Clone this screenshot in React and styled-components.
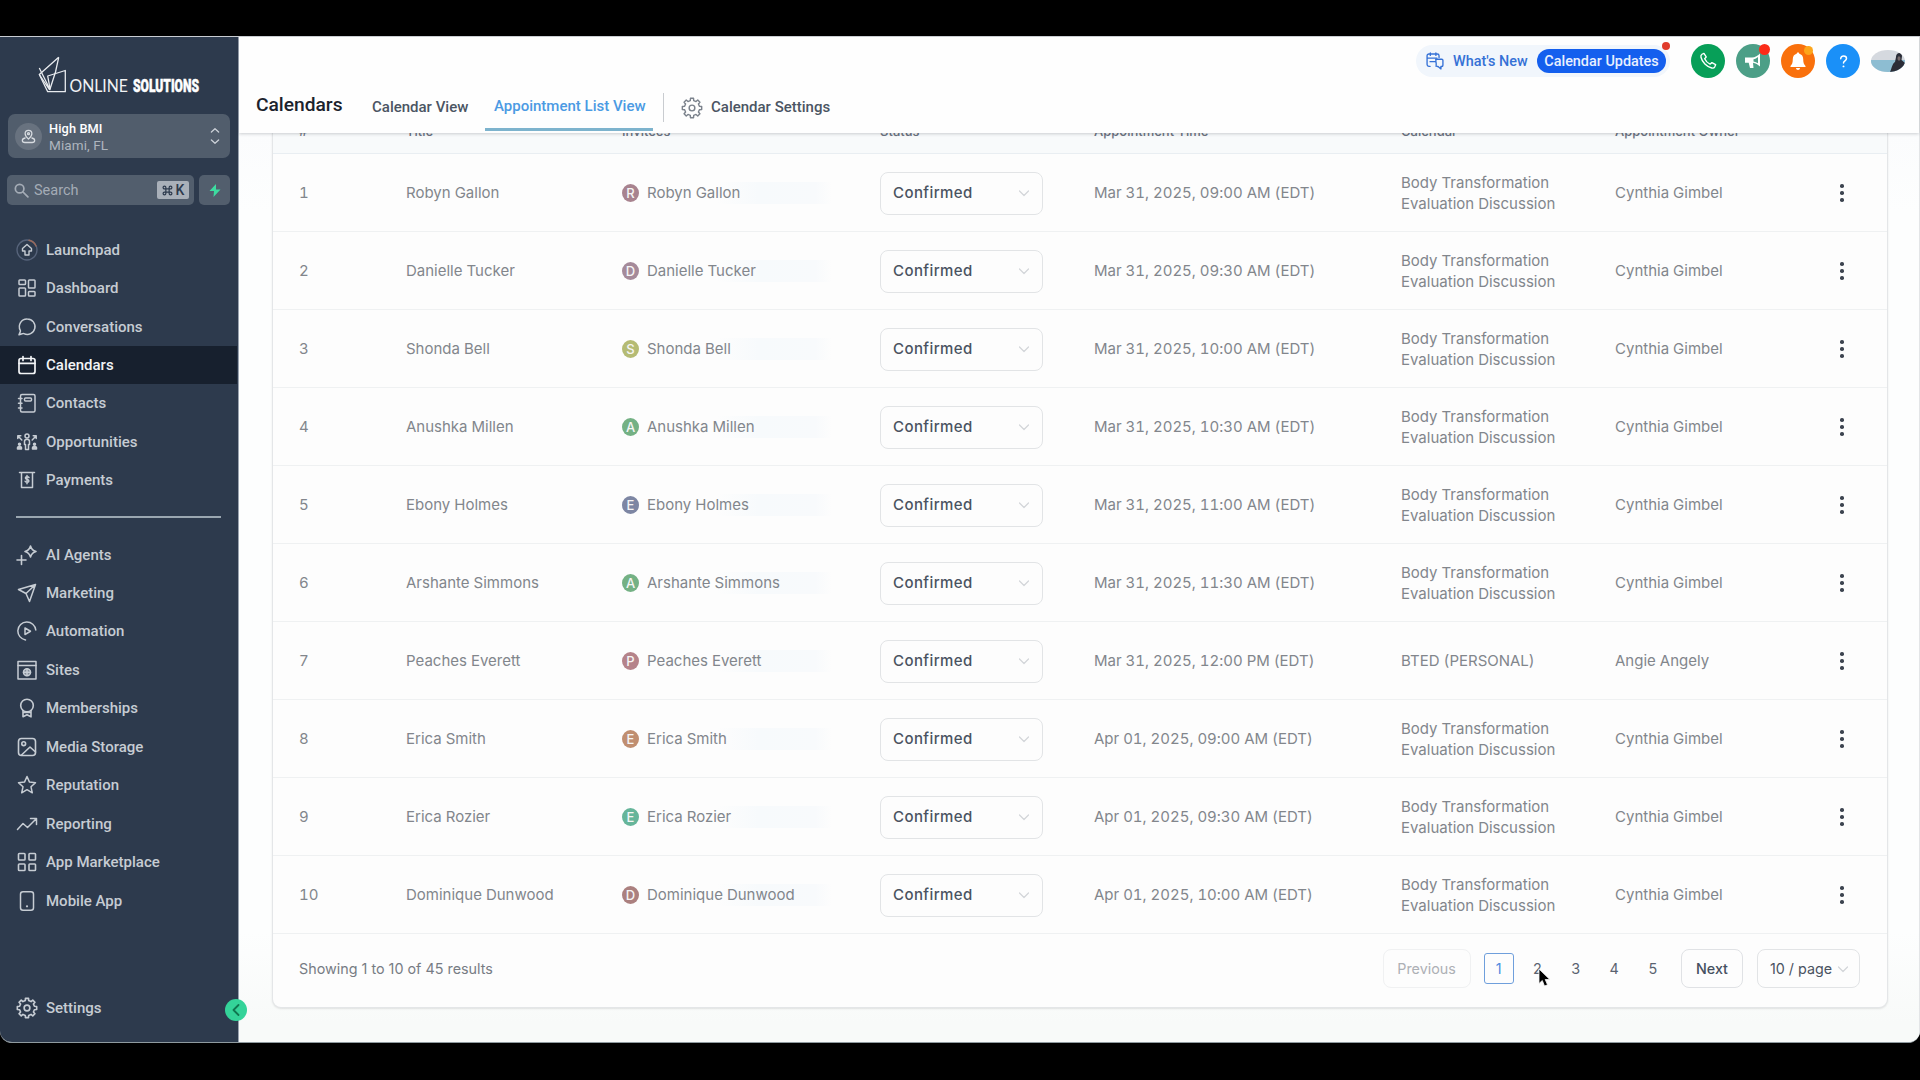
import React from 'react';
import styled, { createGlobalStyle, css } from 'styled-components';

const Global = createGlobalStyle`
  * { box-sizing: border-box; }
  html, body { margin: 0; padding: 0; background: #000; overflow: hidden; }
  body { font-family: Inter, "Liberation Sans", sans-serif; }
`;

const roboto = css`font-family: Roboto, "Liberation Sans", sans-serif;`;

/* ---------- icons ---------- */

const Stroke = styled.svg.attrs((p) => ({ viewBox: p.viewBox || '0 0 20 20' }))`
  width: ${(p) => p.$size || 20}px;
  height: ${(p) => p.$size || 20}px;
  fill: none;
  stroke: currentColor;
  stroke-width: ${(p) => p.$w || 1.5};
  stroke-linecap: round;
  stroke-linejoin: round;
  flex: none;
  display: block;
`;

const cogPath = (() => {
  const pts = [];
  for (let i = 0; i < 8; i += 1) {
    [[-13, 6.9], [-9, 8.9], [9, 8.9], [13, 6.9]].forEach(([d, r]) => {
      const a = ((i * 45 + d) * Math.PI) / 180;
      pts.push(`${(10 + r * Math.sin(a)).toFixed(2)} ${(10 - r * Math.cos(a)).toFixed(2)}`);
    });
  }
  return `M${pts.join('L')}Z`;
})();

const Cog = ({ size, w }) => (
  <Stroke $size={size} $w={w}>
    <path d={cogPath} />
    <circle cx="10" cy="10" r="2.6" />
  </Stroke>
);

const icons = {
  launchpad: (
    <Stroke $size={22} viewBox="0 0 22 22" $w={1.4}>
      <circle cx="11" cy="11" r="10" stroke="#56637a" />
      <path d="M13 1.3A10 10 0 0 1 20 7" stroke="#9a6a5c" />
      <path d="M11 5.5 6.500 9.600V12H9v4h4v-4h2.500V9.600Z" />
    </Stroke>
  ),
  dashboard: (
    <Stroke>
      <rect x="2" y="2" width="6.500" height="4.500" rx=".8" />
      <rect x="11.500" y="2" width="6.500" height="8" rx=".8" />
      <rect x="2" y="10" width="6.500" height="8" rx=".8" />
      <rect x="11.500" y="13.500" width="6.500" height="4.500" rx=".8" />
    </Stroke>
  ),
  chat: (
    <Stroke>
      <path d="M10.300 2a7.700 7.700 0 1 1-3.400 14.600c-.7-.2-1 0-1.600.1L2 17.700l1.300-3.100c.2-.5.2-.7 0-1.200A7.700 7.700 0 0 1 10.300 2Z" />
    </Stroke>
  ),
  calendar: (
    <Stroke $w={1.7}>
      <rect x="2" y="3.500" width="16" height="15" rx="2" />
      <path d="M2 8.300h16M6 1.500v4M14 1.500v4" />
    </Stroke>
  ),
  contacts: (
    <Stroke>
      <rect x="3.500" y="1.500" width="14.500" height="17.500" rx="1.500" />
      <path d="M1.500 5.500h3.500M1.500 10.200h3.500M1.500 15h3.500" />
      <rect x="7.500" y="5" width="7" height="3" rx="1" />
    </Stroke>
  ),
  opportunities: (
    <Stroke viewBox="0 0 22 20" $size={22} $w={1.5}>
      <circle cx="11" cy="4" r="2" />
      <path d="M8.500 9.500c0-3 5-3 5 0v3h-1v5h-3v-5h-1Z" />
      <path d="M1.800 6.500V3.800h3M2 4 5.800 8M20.200 6.500V3.800h-3M20 4 16.200 8" />
      <path d="M1.500 17v-1.500c0-1.500 4-1.500 4 0V17ZM16.500 17v-1.500c0-1.500 4-1.500 4 0V17Z" fill="currentColor" />
      <circle cx="3.500" cy="12.300" r="1" fill="currentColor" /><circle cx="18.500" cy="12.300" r="1" fill="currentColor" />
    </Stroke>
  ),
  payments: (
    <Stroke>
      <path d="M2.500 2.500h15M4.500 2.500V17.500h11V2.500" />
      <path d="M12 7.600c-.6-1.300-3.600-1.200-3.600.4 0 2 3.500 1 3.500 2.900 0 1.700-3.200 1.700-3.800.3M10 5.600v8.200" />
    </Stroke>
  ),
  ai: (
    <Stroke viewBox="0 0 22 20" $size={22} $w={1.6}>
      <path d="M14.500 1c.8 3 2.200 4.600 5.500 5.500-3.300.9-4.700 2.500-5.500 5.500-.8-3-2.200-4.600-5.500-5.500C12.300 5.600 13.700 4 14.500 1Z" />
      <path d="M5.500 10.500v9M1 15h9" />
    </Stroke>
  ),
  send: (
    <Stroke>
      <path d="M18.500 1.500 1.500 6.500l7.500 4L12.500 18.500ZM18.500 1.500 9 10.500" />
    </Stroke>
  ),
  automation: (
    <Stroke>
      <path d="M8.500 18.900A9 9 0 1 1 18.800 9" />
      <path d="M8 7v6.500l5.500-3.250Z" />
    </Stroke>
  ),
  sites: (
    <Stroke>
      <rect x="1" y="1.500" width="18" height="17.500" />
      <path d="M1 5.500h18" />
      <circle cx="10" cy="12.300" r="3.500" fill="currentColor" fillOpacity=".55" />
      <path d="M6.500 12.300h7M10 9v6.500" />
    </Stroke>
  ),
  award: (
    <Stroke $w={1.6}>
      <circle cx="10" cy="7.500" r="6.300" />
      <path d="M6 12.500v6.300l4-2 4 2v-6.300M6.500 14.500h7" />
    </Stroke>
  ),
  media: (
    <Stroke $w={1.6}>
      <rect x="1.500" y="1.500" width="17" height="17" rx="3" />
      <circle cx="6.700" cy="6.700" r="1.900" />
      <path d="M4.500 18 13 10l5.500 5" />
    </Stroke>
  ),
  star: (
    <Stroke>
      <path d="m10 1.500 2.500 5.600 6 .6-4.500 4.100 1.300 6-5.300-3.100-5.300 3.100 1.300-6L1.500 7.700l6-.6Z" />
    </Stroke>
  ),
  trend: (
    <Stroke viewBox="0 0 22 20" $size={22}>
      <path d="m1.500 15.500 5.500-6 4.500 4L20 5M14.500 4.500h6v6" />
    </Stroke>
  ),
  apps: (
    <Stroke $w={1.6}>
      <rect x="1.500" y="1.500" width="6.500" height="6.500" rx=".8" />
      <rect x="12" y="1.500" width="6.500" height="6.500" rx=".8" />
      <rect x="1.500" y="12" width="6.500" height="6.500" rx=".8" />
      <rect x="12" y="12" width="6.500" height="6.500" rx=".8" />
    </Stroke>
  ),
  mobile: (
    <Stroke>
      <rect x="3.500" y=".8" width="13" height="18.400" rx="2.500" />
      <path d="M10 15.300h.01" strokeWidth="2.200" />
    </Stroke>
  ),
  settings: <Cog size={22} w={1.5} />,
};

/* ---------- frame ---------- */

const Screen = styled.div`
  width: 1920px;
  height: 1080px;
  padding: 36px 0 37px;
  background: #000;
`;

const Window = styled.div`
  height: 1007px;
  display: flex;
  overflow: hidden;
  border-radius: 0 0 12px 12px;
  border-top: 1px solid #c9cdd2;
  border-bottom: 1px solid #8f9a9f;
  background: #fcfdfd;
`;

/* ---------- sidebar ---------- */

const Side = styled.aside`
  ${roboto}
  position: relative;
  flex: none;
  width: 239px;
  background: #2d3a4d;
  border-right: 1px solid #9aa3b0;
  color: #ccd1d8;
`;

const Logo = styled.svg`
  display: block;
  width: 170px;
  height: 50px;
  margin: 17px 0 0 36px;
`;

const Account = styled.div`
  display: flex;
  align-items: center;
  width: 222px;
  height: 44px;
  margin: 10px 0 0 8px;
  padding: 0 6px 0 7px;
  border-radius: 7px;
  background: #515d6c;
`;

const Pin = styled.span`
  display: grid;
  place-items: center;
  width: 27px;
  height: 27px;
  margin-right: 7px;
  border-radius: 50%;
  background: #68727f;
  color: #d7dbe0;
`;

const AccountText = styled.div`
  flex: 1;
  padding-top: 1px;
  font-size: 13.500px;
  line-height: 16px;
  color: #aeb5be;
  letter-spacing: .1px;
  b { display: block; font-weight: 500; font-size: 12.800px; color: #fff; }
`;

const SearchRow = styled.div`
  display: flex;
  gap: 5px;
  margin: 17px 0 0 7px;
`;

const SearchBox = styled.div`
  display: flex;
  align-items: center;
  width: 187px;
  height: 30px;
  padding: 0 5px 0 7px;
  border-radius: 5px;
  background: #525e6d;
  color: #a4acb6;
  font-size: 14.500px;
  span { flex: 1; margin-left: 5px; }
`;

const Keys = styled.kbd`
  ${roboto}
  display: flex;
  align-items: center;
  justify-content: center;
  gap: 3px;
  width: 32px;
  height: 18px;
  border-radius: 2px;
  background: #a9b0b9;
  color: #2d3a4d;
  font-size: 14px;
  font-weight: 500;
`;

const Bolt = styled.div`
  display: grid;
  place-items: center;
  width: 31px;
  height: 30px;
  border-radius: 5px;
  background: #525e6d;
`;

const Nav = styled.nav`
  display: flex;
  flex-direction: column;
  margin-top: ${(p) => p.$top}px;
`;

const NavItem = styled.a`
  display: flex;
  align-items: center;
  height: 38.450px;
  margin-right: 1px;
  font-size: 15px;
  font-weight: 500;
  color: ${(p) => (p.$active ? '#f2f4f6' : '#c6ccd3')};
  background: ${(p) => (p.$active ? '#17202e' : 'transparent')};
`;

const IconSlot = styled.span`
  display: grid;
  place-items: center;
  width: 22px;
  margin: 0 8.500px 0 15.500px;
`;

const Rule = styled.hr`
  width: 205px;
  height: 2px;
  margin: 16px 0 0 16px;
  border: 0;
  background: #9aa6b0;
`;

const Collapse = styled.button`
  position: absolute;
  right: -9px;
  bottom: 21px;
  z-index: 5;
  display: grid;
  place-items: center;
  width: 22px;
  height: 22px;
  padding: 0;
  border: 0;
  border-radius: 50%;
  background: #34d399;
  color: #10764f;
`;

/* ---------- header ---------- */

const Main = styled.main`
  flex: 1;
  display: flex;
  flex-direction: column;
  min-width: 0;
  border-right: 1px solid #e3e5e7;
`;

const Header = styled.header`
  ${roboto}
  position: relative;
  z-index: 2;
  height: 96px;
  background: #fefefe;
  box-shadow: 0 1px 3px rgba(40, 50, 60, .22);
`;

const TopRow = styled.div`
  display: flex;
  align-items: center;
  justify-content: flex-end;
  height: 48px;
  padding-right: 14px;
`;

const NewsPill = styled.div`
  position: relative;
  display: flex;
  align-items: center;
  height: 32px;
  width: 254px;
  margin-right: 21px;
  padding-left: 10px;
  border-radius: 16px;
  background: #f1f6fc;
  font-size: 14.400px;
  font-weight: 500;
  color: #3571d6;
  svg { margin-right: 9px; }
`;

const Updates = styled.b`
  display: grid;
  place-items: center;
  width: 129px;
  height: 24px;
  margin-left: auto;
  margin-right: 4px;
  border-radius: 12px;
  background: #145fee;
  color: #e8f0ff;
  font-weight: 500;
`;

const Dot = styled.i`
  position: absolute;
  top: ${(p) => p.$top}px;
  right: ${(p) => p.$right}px;
  width: ${(p) => p.$size}px;
  height: ${(p) => p.$size}px;
  border-radius: 50%;
  background: ${(p) => p.$color};
`;

const Round = styled.button`
  position: relative;
  display: grid;
  place-items: center;
  width: 34px;
  height: 34px;
  margin-right: 11px;
  padding: 0;
  border: 0;
  border-radius: 50%;
  background: ${(p) => p.$bg};
  color: #fff;
`;

const Face = styled.svg`
  width: 34px;
  height: 22px;
`;

const Tabs = styled.div`
  display: flex;
  height: 48px;
  padding-left: 17px;
  color: #4b5563;
  font-size: 15px;
`;

const Heading = styled.h1`
  width: 116px;
  margin: 0;
  padding-top: 8px;
  font-size: 19.200px;
  line-height: 24px;
  font-weight: 500;
  color: #1b222c;
`;

const Tab = styled.span`
  width: ${(p) => p.$width}px;
  height: 46px;
  padding: 12px 0 0;
  line-height: 20px;
  font-weight: 500;
  white-space: nowrap;
  ${(p) => p.$active && css`
    padding: 11px 0 0 9px;
    color: #4b9ae3;
    border-bottom: 3px solid #7db3cd;
  `}
`;

const Split = styled.i`
  width: 1px;
  height: 29px;
  margin: 8px 17px 0 10px;
  background: #c9ccd0;
`;

const CogSlot = styled.span`
  padding-top: 12px;
  margin-right: 8px;
  color: #7b828c;
`;

/* ---------- table ---------- */

const Body = styled.section`
  flex: 1;
  min-height: 0;
  overflow: hidden;
  padding: 0 31px 0 33px;
  background: linear-gradient(#fbfcfd 0, #fdfefe 80px, #fdfefe 800px, #f8faf9 890px);
`;

const Card = styled.div`
  height: 876px;
  margin-top: -1px;
  border: 1px solid #e4e6e8;
  border-top: 0;
  border-radius: 0 0 9px 9px;
  background: #fdfdfd;
  box-shadow: 0 1px 2px rgba(0, 0, 0, .1);
`;

const columns = css`
  display: grid;
  grid-template-columns: 107px 216px 258px 214px 307px 214px 1fr 30px;
  align-items: center;
  padding: 0 27px 0 26px;
`;

const HeadRow = styled.div`
  ${columns}
  height: 22px;
  align-items: start;
  background: #f8fafb;
  border-bottom: 1px solid #e9eef2;
  font-size: 13px;
  line-height: 16px;
  font-weight: 500;
  color: #6b7280;
  span { margin-top: -9px; white-space: nowrap; }
`;

const Row = styled.div`
  ${columns}
  height: 78px;
  border-bottom: 1px solid #eff1f2;
  font-size: 15px;
  line-height: 21.500px;
  font-variant-numeric: tabular-nums;
  color: #82868c;
`;

const Cell = styled.span`
  padding-top: 1px;
  letter-spacing: ${(p) => p.$track || 0}px;
`;

const Invitee = styled.div`
  display: flex;
  align-items: center;
  width: 210px;
  height: 22px;
  margin-top: 1px;
  background: linear-gradient(90deg, transparent 45%, #f7fafc 65%, #f8fafc 92%, transparent);
`;

const Initial = styled.i`
  display: grid;
  place-items: center;
  width: 17px;
  height: 18px;
  margin-right: 8px;
  border-radius: 50%;
  background: ${(p) => p.$bg};
  color: #f5f5f5;
  font-size: 13px;
  line-height: 1;
  font-style: normal;
  font-weight: 500;
`;

const Select = styled.div`
  display: flex;
  align-items: center;
  justify-content: space-between;
  width: ${(p) => p.$w || 163}px;
  height: ${(p) => p.$h || 43}px;
  margin-top: 1px;
  padding: 0 12px 0 12px;
  border: 1.500px solid #e2e4e6;
  border-radius: 8px;
  color: #4a5361;
  font-weight: 500;
  letter-spacing: .42px;
  svg { color: #d2d5d9; }
`;

const Kebab = styled.span`
  display: flex;
  flex-direction: column;
  align-items: center;
  gap: 3.500px;
  width: 6px;
  margin: 1px 0 0 9px;
  i { width: 3.500px; height: 3.500px; border-radius: 50%; background: #3d4450; }
`;

const Footer = styled.footer`
  display: flex;
  align-items: center;
  justify-content: space-between;
  height: 69px;
  padding: 0 27px 0 26px;
  font-size: 14.350px;
  color: #777c84;
`;

const Pager = styled.div`
  display: flex;
  align-items: center;
`;

const PageButton = styled.button`
  width: ${(p) => p.$w}px;
  height: 39px;
  padding: 0;
  border: 1px solid ${(p) => (p.disabled ? '#f0f1f2' : '#e0e2e5')};
  border-radius: 8px;
  background: transparent;
  color: ${(p) => (p.disabled ? '#adb0b5' : '#465060')};
  font: ${(p) => (p.disabled ? 400 : 500)} 14.300px Inter, sans-serif;
`;

const Pages = styled.div`
  display: flex;
  gap: 8px;
  margin: 0 13px;
`;

const Page = styled.span`
  position: relative;
  display: grid;
  place-items: center;
  width: 30.500px;
  height: 31px;
  border: 1.500px solid ${(p) => (p.$on ? '#6f9fdc' : 'transparent')};
  border-radius: 3px;
  color: ${(p) => (p.$on ? '#4f8ce0' : '#5a6370')};
`;

const Cursor = styled.svg`
  position: absolute;
  left: 15px;
  top: 14px;
  width: 14px;
  height: 20px;
`;

const PageSize = styled(Select).attrs({ $w: 103, $h: 39 })`
  margin: 0 0 0 14px;
  padding: 0 10px 0 12px;
  border-width: 1px;
  font-size: 14.300px;
  font-weight: 400;
  letter-spacing: 0;
  white-space: nowrap;
`;

const Chevron = () => (
  <Stroke $size={12} viewBox="0 0 12 12" $w={1.2}><path d="M1.500 4 6 8.500l4.500-4.500" /></Stroke>
);

const first = [
  ['launchpad', 'Launchpad'], ['dashboard', 'Dashboard'], ['chat', 'Conversations'], ['calendar', 'Calendars'],
  ['contacts', 'Contacts'], ['opportunities', 'Opportunities'], ['payments', 'Payments'],
];
const second = [
  ['ai', 'AI Agents'], ['send', 'Marketing'], ['automation', 'Automation'], ['sites', 'Sites'],
  ['award', 'Memberships'], ['media', 'Media Storage'], ['star', 'Reputation'], ['trend', 'Reporting'],
  ['apps', 'App Marketplace'], ['mobile', 'Mobile App'],
];

const rows = [
  ['Robyn Gallon', 'Mar 31, 2025, 09:00 AM (EDT)', '#a8838f'],
  ['Danielle Tucker', 'Mar 31, 2025, 09:30 AM (EDT)', '#a58a9a'],
  ['Shonda Bell', 'Mar 31, 2025, 10:00 AM (EDT)', '#b5bb74'],
  ['Anushka Millen', 'Mar 31, 2025, 10:30 AM (EDT)', '#74b184'],
  ['Ebony Holmes', 'Mar 31, 2025, 11:00 AM (EDT)', '#7d86a3'],
  ['Arshante Simmons', 'Mar 31, 2025, 11:30 AM (EDT)', '#74b184'],
  ['Peaches Everett', 'Mar 31, 2025, 12:00 PM (EDT)', '#b5838a'],
  ['Erica Smith', 'Apr 01, 2025, 09:00 AM (EDT)', '#c08e70'],
  ['Erica Rozier', 'Apr 01, 2025, 09:30 AM (EDT)', '#66b59a'],
  ['Dominique Dunwood', 'Apr 01, 2025, 10:00 AM (EDT)', '#ab807f'],
];

const Item = ({ icon, label }) => (
  <NavItem $active={label === 'Calendars'}>
    <IconSlot>{icons[icon]}</IconSlot>
    {label}
  </NavItem>
);

export default function App() {
  return (
    <Screen>
      <Global />
      <Window>
        <Side>
          <Logo viewBox="0 0 170 50">
            <g fill="none" stroke="#e8ebef" strokeWidth="1.300" strokeLinejoin="round">
              <path d="M22.700 3.300 3.300 20.500 11.700 37.700H29.300V16.500L11.700 22 14 34.500" />
              <path d="M22.700 3.300 19.500 18 13.700 36" />
              <path d="M3.300 14 14 35.500M3.300 20.500 13.700 36" />
            </g>
            <text x="33.500" y="38" fill="#f1f3f5" fontFamily="Lato, sans-serif" fontSize="17.500" textLength="58.500" lengthAdjust="spacingAndGlyphs">ONLINE</text>
            <text x="97" y="38" fill="#fff" stroke="#fff" strokeWidth=".5" fontFamily="Roboto, sans-serif" fontWeight="900" fontSize="17.500" textLength="66" lengthAdjust="spacingAndGlyphs">SOLUTIONS</text>
          </Logo>
          <Account>
            <Pin>
              <Stroke $size={15} $w={1.700}>
                <path d="M10 13.500C7 10.800 5.500 8.800 5.500 6.300a4.500 4.500 0 0 1 9 0c0 2.500-1.500 4.500-4.500 7.200Z" />
                <circle cx="10" cy="6.300" r="1.300" />
                <path d="M5.500 12C3 12.500 1.800 13.800 1.800 15.200c0 1.800 1.500 2.800 3.500 2.800h9.400c2 0 3.500-1 3.500-2.800 0-1.400-1.200-2.700-3.700-3.200" />
              </Stroke>
            </Pin>
            <AccountText><b>High BMI</b>Miami, FL</AccountText>
            <Stroke $size={18} $w={1.500}><path d="M6 5.500 10 2l4 3.500M6 14.500l4 3.500 4-3.500" /></Stroke>
          </Account>
          <SearchRow>
            <SearchBox>
              <Stroke $size={15} $w={2.300}><circle cx="7.500" cy="7.500" r="5.700" /><path d="m12 12 6.500 6.500" /></Stroke>
              <span>Search</span>
              <Keys>
                <Stroke $size={11} $w={2.200}>
                  <path d="M7 7V4.500A2.500 2.500 0 1 0 4.500 7H15.500A2.500 2.500 0 1 0 13 4.500V15.500A2.500 2.500 0 1 0 15.500 13H4.500A2.500 2.500 0 1 0 7 15.500Z" />
                </Stroke>
                K
              </Keys>
            </SearchBox>
            <Bolt>
              <svg width="12" height="13" viewBox="0 0 12 13"><path d="M7 0 .5 7H5l-.5 6L11.500 5.500H7Z" fill="#3ddba0" /></svg>
            </Bolt>
          </SearchRow>
          <Nav $top={25.5}>
            {first.map(([icon, label]) => <Item key={label} icon={icon} label={label} />)}
          </Nav>
          <Rule />
          <Nav $top={17.8}>
            {second.map(([icon, label]) => <Item key={label} icon={icon} label={label} />)}
          </Nav>
          <Nav $top={69}>
            <Item icon="settings" label="Settings" />
          </Nav>
          <Collapse><Stroke $size={12} viewBox="0 0 12 12" $w={1.800}><path d="M8.500 1 3.500 6l5 5" /></Stroke></Collapse>
        </Side>
        <Main>
          <Header>
            <TopRow>
              <NewsPill>
                <Stroke $size={18} $w={1.500}>
                  <path d="M4.500 16H3.200a2 2 0 0 1-2-2V4.200a2 2 0 0 1 2-2h9.300a2 2 0 0 1 2 2V6M1.200 6.800h11M4.800 1v2.800M11 1v2.800" />
                  <path d="M11 8h6.500a1.300 1.300 0 0 1 1.300 1.300v5.500a1.300 1.300 0 0 1-1.300 1.300h-.9v2.700l-3.200-2.700h-.9" />
                  <path d="M11 8v3M4.500 10.700h5.500a1.300 1.300 0 0 1 1.300 1.300v4" />
                </Stroke>
                What's New
                <Updates>Calendar Updates</Updates>
                <Dot $top={-3} $right={0} $size={8} $color="#e03b2c" />
              </NewsPill>
              <Round $bg="#079f58">
                <Stroke $size={18} $w={1.500}>
                  <path d="M3.300 2.500 5.500 1.500 8 5.500 6.300 7.500c1.200 2.600 3.400 4.800 6 6l2-1.700 4.200 2.300-1 2.400c-.7 1.300-1.900 1.700-3.300 1.300C8.500 16.300 3.500 11.300 2.200 5.800 1.900 4.400 2.200 3.200 3.300 2.500Z" />
                </Stroke>
              </Round>
              <Round $bg="#4c9f87">
                <svg width="18" height="18" viewBox="0 0 18 18">
                  <path fill="#fff" fillRule="evenodd" d="M1 5.500h7C11 5.500 14 3.500 16 1.500v13c-2-2-4.500-3.500-7-3.800L9.500 16H6l-1.300-5.300H1ZM9.500 7.200v2.200c1.800.3 3.200 1 4.500 1.900V4.900c-1.300 1.200-2.800 2-4.500 2.300Z" />
                </svg>
                <Dot $top={0} $right={0} $size={11} $color="#fb2c18" />
              </Round>
              <Round $bg="#f9700c">
                <svg width="18" height="20" viewBox="0 0 18 20">
                  <path fill="#fff" d="M9 1.500c.8 0 1.300.5 1.300 1.300 2.500.6 3.900 2.600 3.900 5.200 0 4 .8 5.500 2.300 7v1h-15v-1C3 13.500 3.800 12 3.800 8c0-2.600 1.400-4.600 3.900-5.200 0-.8.500-1.300 1.300-1.300ZM7 17h4c0 2.500-4 2.500-4 0Z" />
                </svg>
                <Dot $top={2} $right={2} $size={9} $color="#fda51a" />
              </Round>
              <Round $bg="#1a90f8">
                <Stroke $size={15} $w={2}><path d="M6.300 6.300c0-5 7.700-4.500 7.700-.3 0 3-4 3.200-4 6" /><path d="M10 16.500h.01" strokeWidth="2.600" /></Stroke>
              </Round>
              <Face viewBox="0 0 34 22">
                <defs><clipPath id="face"><ellipse cx="17" cy="11" rx="17" ry="11" /></clipPath></defs>
                <g clipPath="url(#face)">
                  <rect width="34" height="22" fill="#d5d9df" />
                  <rect y="10" width="34" height="12" fill="#8dbdd2" />
                  <path d="M19 22c2-4 2-8 5-10l1-5c0-5 6-5 6-1l-.5 4 3.500 3v9Z" fill="#2b2d37" />
                  <path d="M26.500 8.500c0-3 3-3 3 0s-3 3 -3 0Z" fill="#75696a" />
                </g>
              </Face>
            </TopRow>
            <Tabs>
              <Heading>Calendars</Heading>
              <Tab $width={113}>Calendar View</Tab>
              <Tab $active $width={168}>Appointment List View</Tab>
              <Split />
              <CogSlot><Cog size={22} w={1.300} /></CogSlot>
              <Tab>Calendar Settings</Tab>
            </Tabs>
          </Header>
          <Body>
            <Card>
              <HeadRow>
                {['#', 'Title', 'Invitees', 'Status', 'Appointment Time', 'Calendar', 'Appointment Owner'].map((t) => (
                  <span key={t}>{t}</span>
                ))}
              </HeadRow>
              {rows.map(([name, time, color], i) => (
                <Row key={name}>
                  <Cell>{i + 1}</Cell>
                  <Cell>{name}</Cell>
                  <Invitee><Initial $bg={color}>{name[0]}</Initial>{name}</Invitee>
                  <Select>Confirmed<Chevron /></Select>
                  <Cell $track={-0.02}>{time}</Cell>
                  {i === 6 ? <Cell>BTED (PERSONAL)</Cell> : <Cell>Body Transformation<br />Evaluation Discussion</Cell>}
                  <Cell>{i === 6 ? 'Angie Angely' : 'Cynthia Gimbel'}</Cell>
                  <Kebab><i /><i /><i /></Kebab>
                </Row>
              ))}
              <Footer>
                <span>Showing 1 to 10 of 45 results</span>
                <Pager>
                  <PageButton disabled $w={88}>Previous</PageButton>
                  <Pages>
                    {[1, 2, 3, 4, 5].map((n) => (
                      <Page key={n} $on={n === 1}>
                        {n}
                        {n === 2 && (
                          <Cursor viewBox="0 0 14 20">
                            <path d="M1 1v14.500l3.300-3 2.200 5.500 3-1.200-2.300-5.300h4.600Z" fill="#000" stroke="#f4f4f4" strokeWidth=".8" />
                          </Cursor>
                        )}
                      </Page>
                    ))}
                  </Pages>
                  <PageButton $w={62}>Next</PageButton>
                  <PageSize>10 / page<Chevron /></PageSize>
                </Pager>
              </Footer>
            </Card>
          </Body>
        </Main>
      </Window>
    </Screen>
  );
}
